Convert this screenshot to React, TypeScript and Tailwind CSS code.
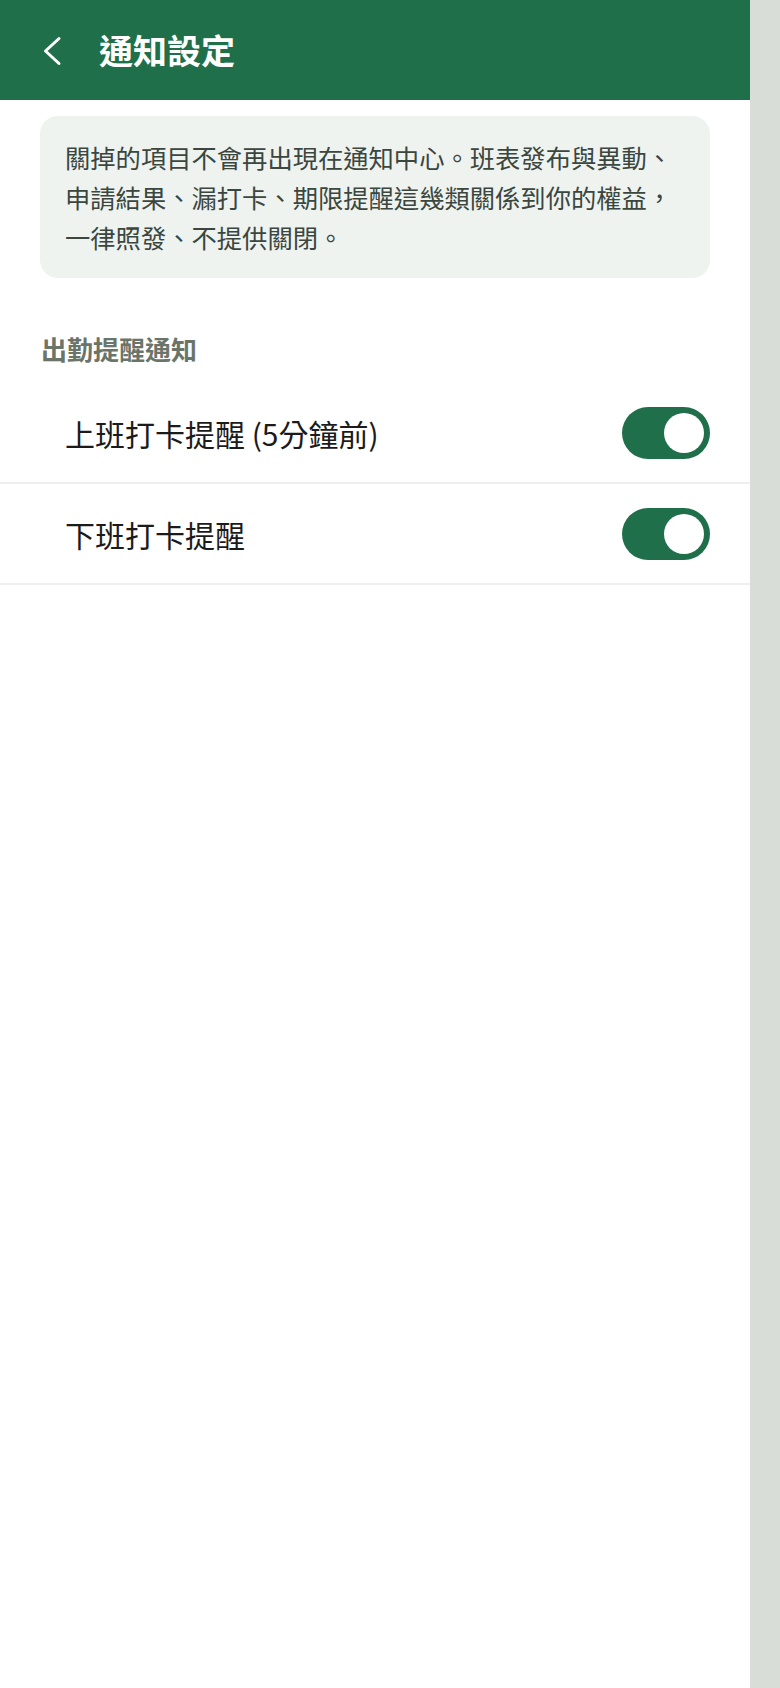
import React, { useState } from 'react';

const FONT = '"Noto Sans CJK TC", "Noto Sans", sans-serif';

const Toggle = ({ on, onChange }: { on: boolean; onChange: () => void }) => (
  <button
    onClick={onChange}
    className={`flex h-[52px] w-[88px] shrink-0 items-center rounded-full p-[6px] ${
      on ? 'justify-end bg-[#1f6f4b]' : 'justify-start bg-[#d5d9d4]'
    }`}
  >
    <span className="block h-[40px] w-[40px] rounded-full bg-white" />
  </button>
);

export default function App() {
  const [rows, setRows] = useState([
    { label: '上班打卡提醒 (5分鐘前)', on: true },
    { label: '下班打卡提醒', on: true },
  ]);

  return (
    <div className="flex min-h-screen w-full bg-[#d8ded7]" style={{ fontFamily: FONT }}>
      <div className="min-h-screen w-[750px] bg-white">
        {/* header */}
        <div className="flex h-[100px] items-center bg-[#1f6f4b]">
          <button className="ml-[40px] flex h-[40px] w-[30px] items-center justify-start">
            <svg width="24" height="32" viewBox="0 0 24 32" fill="none">
              <path d="M19 4.5 L5.5 17 L19 29.5" stroke="white" strokeWidth="3" strokeLinecap="round" strokeLinejoin="round" />
            </svg>
          </button>
          <h1 className="ml-[29px] text-[34px] font-bold leading-none text-white">通知設定</h1>
        </div>

        {/* notice */}
        <div className="ml-[40px] mt-[16px] w-[670px] rounded-[18px] bg-[#eef3ef] px-[25px] py-[21px]">
          <p className="text-[25.3px] leading-[40px] text-[#3b463f]">
            關掉的項目不會再出現在通知中心。班表發布與異動、申請結果、漏打卡、期限提醒這幾類關係到你的權益，一律照發、不提供關閉。
          </p>
        </div>

        {/* section */}
        <div className="px-[41px] pb-[17px] pt-[54px] text-[26px] font-bold leading-[34px] text-[#6b7468]">
          出勤提醒通知
        </div>

        {rows.map((r, i) => (
          <div
            key={i}
            className="flex h-[101px] items-center justify-between border-b-2 border-[#efefef] pl-[65px] pr-[40px]"
          >
            <span className="text-[30px] leading-none text-[#1b1b1b]">{r.label}</span>
            <Toggle
              on={r.on}
              onChange={() => setRows(rows.map((x, j) => (j === i ? { ...x, on: !x.on } : x)))}
            />
          </div>
        ))}
      </div>
    </div>
  );
}
